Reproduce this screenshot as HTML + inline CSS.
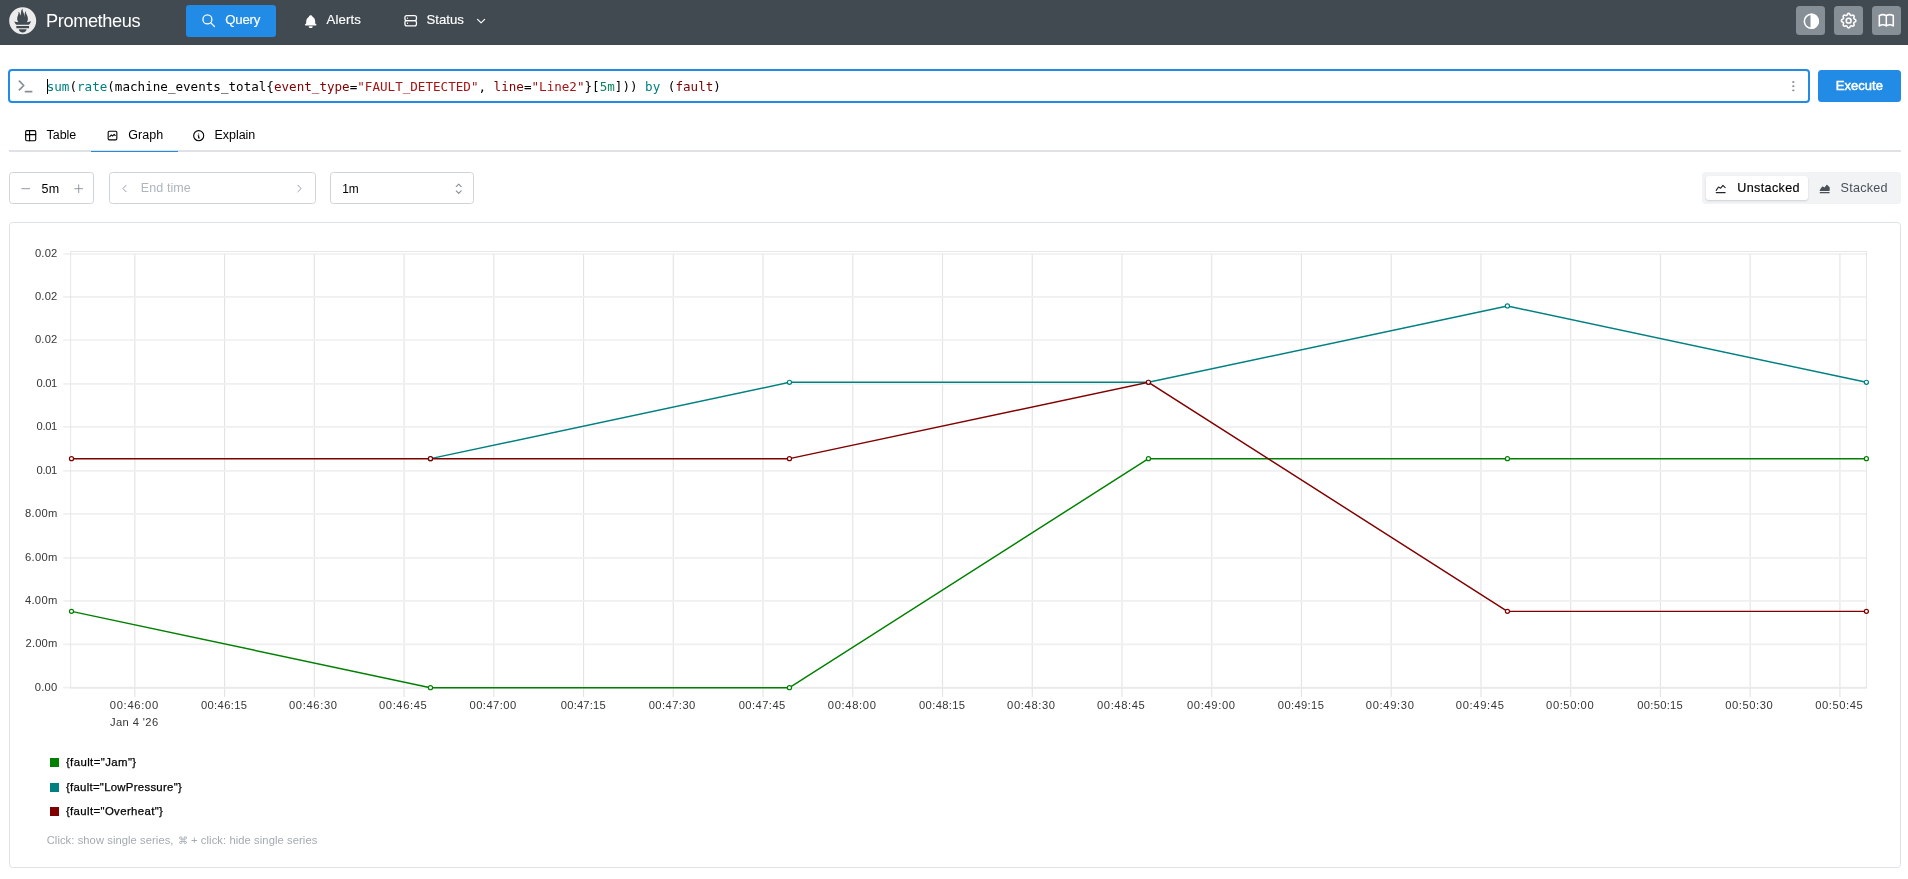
<!DOCTYPE html>
<html lang="en"><head><meta charset="utf-8"><title>Prometheus Time Series Collection and Processing Server</title>
<style>
html,body{margin:0;padding:0;background:#fff;}
body{width:1908px;height:879px;overflow:hidden;position:relative;font-family:"Liberation Sans",sans-serif;}
.t{position:absolute;white-space:pre;line-height:1;}
#root{position:absolute;left:0;top:0;width:1908px;height:879px;will-change:transform;}
.i{position:absolute;overflow:visible;}
.b{position:absolute;box-sizing:border-box;}

#hdr{left:0;top:0;width:1908px;height:44.7px;background:rgb(65,73,81);}
.navact{background:#228be6;border-radius:3px;}
.abtn{background:#868e96;border-radius:3.5px;}
#qin{border:2px solid #228be6;border-radius:4px;background:#fff;}
#exec{background:#228be6;border-radius:3.5px;}
.inp{border:1px solid #ced4da;border-radius:3.5px;background:#fff;}
#tabline{background:#dee2e6;}
#tabact{background:#228be6;}
#seg{background:#f1f3f5;border-radius:3.5px;}
#segact{background:#fff;border-radius:3px;box-shadow:0 1px 3px rgba(0,0,0,.05),0 1px 2px rgba(0,0,0,.1);}
#card{border:1px solid #dee2e6;border-radius:3.5px;background:#fff;}
.sw{position:absolute;width:9px;height:9px;}
.semi{-webkit-text-stroke:0.45px currentColor;}
.med{-webkit-text-stroke:0.15px currentColor;}
.med2{-webkit-text-stroke:0.25px currentColor;}

</style></head><body><div id="root">
<header class="b" id="hdr"></header>
<svg class="i" style="left:8.9px;top:6.9px" width="27.4" height="27.4" viewBox="0 0 113.333 114.666"><path fill="#ececec" d="M56.667,0.667C25.372,0.667,0,26.036,0,57.332c0,31.295,25.372,56.666,56.667,56.666 s56.666-25.371,56.666-56.666C113.333,26.036,87.961,0.667,56.667,0.667z M56.667,106.722c-8.904,0-16.123-5.948-16.123-13.283 H72.79C72.79,100.773,65.571,106.722,56.667,106.722z M83.297,89.04H30.034v-9.658h53.264V89.04z M83.106,74.411h-52.92 c-0.176-0.203-0.356-0.403-0.526-0.609c-5.452-6.62-6.736-10.076-7.983-13.598c-0.021-0.116,6.611,1.355,11.314,2.413 c0,0,2.42,0.56,5.958,1.205c-3.397-3.982-5.414-9.044-5.414-14.218c0-11.359,8.712-21.285,5.569-29.308 c3.059,0.249,6.331,6.456,6.552,16.161c3.252-4.494,4.613-12.701,4.613-17.733c0-5.21,3.433-11.262,6.867-11.469 c-3.061,5.045,0.793,9.37,4.219,20.099c1.285,4.03,1.121,10.812,2.113,15.113C63.797,33.534,65.333,20.5,71,16 c-2.5,5.667,0.37,12.758,2.333,16.167c3.167,5.5,5.087,9.667,5.087,17.548c0,5.284-1.951,10.259-5.242,14.148 c3.742-0.702,6.326-1.335,6.326-1.335l12.152-2.371C91.657,60.156,89.891,67.418,83.106,74.411z"/></svg>
<span class="t " style="left:46.00px;top:11.99px;font-size:18.2px;letter-spacing:-0.389px;color:#fff;font-family:'Liberation Sans', sans-serif;">Prometheus</span>
<div class="b navact" style="left:186px;top:5.2px;width:89.8px;height:31.6px"></div>
<svg class="i" style="left:200.50px;top:12.90px;" width="15.4" height="15.4" viewBox="0 0 24 24" fill="none" stroke="#fff" stroke-width="2" stroke-linecap="round" stroke-linejoin="round"><circle cx="10" cy="10" r="7"/><path d="M21 21l-6 -6"/></svg>
<span class="t med" style="left:225.20px;top:12.93px;font-size:13.2px;letter-spacing:-0.193px;color:#fff;font-family:'Liberation Sans', sans-serif;">Query</span>
<svg class="i" style="left:302.60px;top:13.50px;" width="15.4" height="15.4" viewBox="0 0 24 24" fill="none" stroke="none" stroke-width="2" stroke-linecap="round" stroke-linejoin="round"><path stroke="none" fill="#fff" d="M14.235 19c.865 0 1.322 1.024 .745 1.668a3.992 3.992 0 0 1 -2.98 1.332a3.992 3.992 0 0 1 -2.98 -1.332c-.552 -.616 -.158 -1.579 .634 -1.661l.11 -.006h4.471z"/><path stroke="none" fill="#fff" d="M12 2c1.358 0 2.506 .903 2.875 2.141l.046 .171l.008 .043a8.013 8.013 0 0 1 4.024 6.069l.028 .287l.019 .289v2.931l.021 .136a3 3 0 0 0 1.143 1.847l.167 .117l.162 .099c.86 .487 .56 1.766 -.377 1.864l-.116 .006h-16c-1.028 0 -1.387 -1.364 -.493 -1.87a3 3 0 0 0 1.472 -2.063l.021 -.143l.001 -2.97a8 8 0 0 1 3.821 -6.454l.248 -.146l.01 -.043a3.003 3.003 0 0 1 2.562 -2.29l.182 -.017l.176 -.004z"/></svg>
<span class="t med" style="left:326.60px;top:12.93px;font-size:13.2px;letter-spacing:0.095px;color:#fff;font-family:'Liberation Sans', sans-serif;">Alerts</span>
<svg class="i" style="left:402.70px;top:13.10px;" width="15.4" height="15.4" viewBox="0 0 24 24" fill="none" stroke="#fff" stroke-width="2" stroke-linecap="round" stroke-linejoin="round"><path d="M3 7a3 3 0 0 1 3 -3h12a3 3 0 0 1 3 3v2a3 3 0 0 1 -3 3h-12a3 3 0 0 1 -3 -3z"/><path d="M3 15a3 3 0 0 1 3 -3h12a3 3 0 0 1 3 3v2a3 3 0 0 1 -3 3h-12a3 3 0 0 1 -3 -3z"/><path d="M7 8l0 .01"/><path d="M7 16l0 .01"/></svg>
<span class="t med" style="left:426.60px;top:12.93px;font-size:13.2px;letter-spacing:-0.044px;color:#fff;font-family:'Liberation Sans', sans-serif;">Status</span>
<svg class="i" style="left:474.00px;top:14.00px;" width="14.2" height="14.2" viewBox="0 0 24 24" fill="none" stroke="#fff" stroke-width="2" stroke-linecap="round" stroke-linejoin="round"><path d="M6 9l6 6l6 -6"/></svg>
<div class="b abtn" style="left:1796.2px;top:6px;width:28.8px;height:28.8px"></div>
<svg class="i" style="left:1802.10px;top:11.70px;" width="18.6" height="18.6" viewBox="0 0 24 24" fill="none" stroke="#fff" stroke-width="2" stroke-linecap="round" stroke-linejoin="round"><circle cx="12" cy="12" r="9"/><path d="M12 3a9 9 0 0 1 0 18z" fill="#fff"/></svg>
<div class="b abtn" style="left:1834.2px;top:6px;width:28.8px;height:28.8px"></div>
<svg class="i" style="left:1839.05px;top:10.65px;" width="19.3" height="19.3" viewBox="0 0 24 24" fill="none" stroke="#fff" stroke-width="2" stroke-linecap="round" stroke-linejoin="round"><path d="M10.325 4.317c.426 -1.756 2.924 -1.756 3.35 0a1.724 1.724 0 0 0 2.573 1.066c1.543 -.94 3.31 .826 2.37 2.37a1.724 1.724 0 0 0 1.065 2.572c1.756 .426 1.756 2.924 0 3.35a1.724 1.724 0 0 0 -1.066 2.573c.94 1.543 -.826 3.31 -2.37 2.37a1.724 1.724 0 0 0 -2.572 1.065c-.426 1.756 -2.924 1.756 -3.35 0a1.724 1.724 0 0 0 -2.573 -1.066c-1.543 .94 -3.31 -.826 -2.37 -2.37a1.724 1.724 0 0 0 -1.065 -2.572c-1.756 -.426 -1.756 -2.924 0 -3.35a1.724 1.724 0 0 0 1.066 -2.573c-.94 -1.543 .826 -3.31 2.37 -2.37c1 .608 2.296 .07 2.572 -1.065z"/><path d="M9 12a3 3 0 1 0 6 0a3 3 0 0 0 -6 0"/></svg>
<div class="b abtn" style="left:1872.2px;top:6px;width:28.8px;height:28.8px"></div>
<svg class="i" style="left:1877.30px;top:11.10px;" width="18.6" height="18.6" viewBox="0 0 24 24" fill="none" stroke="#fff" stroke-width="2" stroke-linecap="round" stroke-linejoin="round"><path d="M3 19a9 9 0 0 1 9 0a9 9 0 0 1 9 0"/><path d="M3 6a9 9 0 0 1 9 0a9 9 0 0 1 9 0"/><path d="M3 6l0 13"/><path d="M12 6l0 13"/><path d="M21 6l0 13"/></svg>
<div class="b" id="qin" style="left:8px;top:69px;width:1802px;height:34px"></div>
<svg class="i" style="left:15.20px;top:75.20px;" width="21.0" height="21.0" viewBox="0 0 24 24" fill="none" stroke="#868e96" stroke-width="2" stroke-linecap="round" stroke-linejoin="round"><path d="M5 7l5 5l-5 5"/><path d="M12 19l7 0"/></svg>
<div class="b" style="left:46.9px;top:79px;width:1px;height:15px;background:#000"></div>
<span class="t" style="left:46.70px;top:80.96px;font-size:12.58px;color:#008080;font-family:'DejaVu Sans Mono','Liberation Mono',monospace;letter-spacing:0.0018px">sum</span>
<span class="t" style="left:69.43px;top:80.96px;font-size:12.58px;color:#000;font-family:'DejaVu Sans Mono','Liberation Mono',monospace;letter-spacing:0.0018px">(</span>
<span class="t" style="left:77.00px;top:80.96px;font-size:12.58px;color:#008080;font-family:'DejaVu Sans Mono','Liberation Mono',monospace;letter-spacing:0.0018px">rate</span>
<span class="t" style="left:107.30px;top:80.96px;font-size:12.58px;color:#000;font-family:'DejaVu Sans Mono','Liberation Mono',monospace;letter-spacing:0.0018px">(machine_events_total{</span>
<span class="t" style="left:273.95px;top:80.96px;font-size:12.58px;color:#800000;font-family:'DejaVu Sans Mono','Liberation Mono',monospace;letter-spacing:0.0018px">event_type</span>
<span class="t" style="left:349.70px;top:80.96px;font-size:12.58px;color:#000;font-family:'DejaVu Sans Mono','Liberation Mono',monospace;letter-spacing:0.0018px">=</span>
<span class="t" style="left:357.27px;top:80.96px;font-size:12.58px;color:#a31515;font-family:'DejaVu Sans Mono','Liberation Mono',monospace;letter-spacing:0.0018px">&quot;FAULT_DETECTED&quot;</span>
<span class="t" style="left:478.48px;top:80.96px;font-size:12.58px;color:#000;font-family:'DejaVu Sans Mono','Liberation Mono',monospace;letter-spacing:0.0018px">, </span>
<span class="t" style="left:493.62px;top:80.96px;font-size:12.58px;color:#800000;font-family:'DejaVu Sans Mono','Liberation Mono',monospace;letter-spacing:0.0018px">line</span>
<span class="t" style="left:523.93px;top:80.96px;font-size:12.58px;color:#000;font-family:'DejaVu Sans Mono','Liberation Mono',monospace;letter-spacing:0.0018px">=</span>
<span class="t" style="left:531.50px;top:80.96px;font-size:12.58px;color:#a31515;font-family:'DejaVu Sans Mono','Liberation Mono',monospace;letter-spacing:0.0018px">&quot;Line2&quot;</span>
<span class="t" style="left:584.53px;top:80.96px;font-size:12.58px;color:#000;font-family:'DejaVu Sans Mono','Liberation Mono',monospace;letter-spacing:0.0018px">}[</span>
<span class="t" style="left:599.68px;top:80.96px;font-size:12.58px;color:#098658;font-family:'DejaVu Sans Mono','Liberation Mono',monospace;letter-spacing:0.0018px">5m</span>
<span class="t" style="left:614.83px;top:80.96px;font-size:12.58px;color:#000;font-family:'DejaVu Sans Mono','Liberation Mono',monospace;letter-spacing:0.0018px">]))</span>
<span class="t" style="left:637.55px;top:80.96px;font-size:12.58px;color:#008080;font-family:'DejaVu Sans Mono','Liberation Mono',monospace;letter-spacing:0.0018px"> by </span>
<span class="t" style="left:667.85px;top:80.96px;font-size:12.58px;color:#000;font-family:'DejaVu Sans Mono','Liberation Mono',monospace;letter-spacing:0.0018px">(</span>
<span class="t" style="left:675.43px;top:80.96px;font-size:12.58px;color:#800000;font-family:'DejaVu Sans Mono','Liberation Mono',monospace;letter-spacing:0.0018px">fault</span>
<span class="t" style="left:713.30px;top:80.96px;font-size:12.58px;color:#000;font-family:'DejaVu Sans Mono','Liberation Mono',monospace;letter-spacing:0.0018px">)</span>
<svg class="i" style="left:1786.40px;top:78.60px;" width="14.4" height="14.4" viewBox="0 0 24 24" fill="#868e96" stroke="#868e96" stroke-width="1.6" stroke-linecap="round" stroke-linejoin="round"><circle cx="12" cy="5" r="1"/><circle cx="12" cy="12" r="1"/><circle cx="12" cy="19" r="1"/></svg>
<div class="b" id="exec" style="left:1818.2px;top:70.2px;width:82.8px;height:31.6px"></div>
<span class="t semi" style="left:1835.80px;top:78.80px;font-size:13.0px;letter-spacing:0.034px;color:#fff;font-family:'Liberation Sans', sans-serif;">Execute</span>
<div class="b" id="tabline" style="left:9px;top:150.1px;width:1892px;height:1.9px"></div>
<div class="b" id="tabact" style="left:91px;top:150.8px;width:87px;height:1.3px"></div>
<svg class="i" style="left:23.70px;top:128.50px;" width="13.4" height="13.4" viewBox="0 0 24 24" fill="none" stroke="#000" stroke-width="2" stroke-linecap="round" stroke-linejoin="round"><path d="M3 5a2 2 0 0 1 2 -2h14a2 2 0 0 1 2 2v14a2 2 0 0 1 -2 2h-14a2 2 0 0 1 -2 -2v-14z"/><path d="M3 10h18"/><path d="M10 3v18"/></svg>
<span class="t " style="left:46.60px;top:128.82px;font-size:12.5px;letter-spacing:-0.069px;color:#000;font-family:'Liberation Sans', sans-serif;">Table</span>
<svg class="i" style="left:106.00px;top:128.80px;" width="13.0" height="13.0" viewBox="0 0 24 24" fill="none" stroke="#000" stroke-width="2" stroke-linecap="round" stroke-linejoin="round"><path d="M4 18v-12a2 2 0 0 1 2 -2h12a2 2 0 0 1 2 2v12a2 2 0 0 1 -2 2h-12a2 2 0 0 1 -2 -2z"/><path d="M7 14l3 -3l2 2l3 -3l2 2"/></svg>
<span class="t " style="left:128.30px;top:128.82px;font-size:12.5px;letter-spacing:0.037px;color:#000;font-family:'Liberation Sans', sans-serif;">Graph</span>
<svg class="i" style="left:191.70px;top:128.60px;" width="13.4" height="13.4" viewBox="0 0 24 24" fill="none" stroke="#000" stroke-width="2" stroke-linecap="round" stroke-linejoin="round"><path d="M3 12a9 9 0 1 0 18 0a9 9 0 0 0 -18 0"/><path d="M12 9h.01"/><path d="M11 12h1v4h1"/></svg>
<span class="t " style="left:214.50px;top:128.82px;font-size:12.5px;letter-spacing:-0.033px;color:#000;font-family:'Liberation Sans', sans-serif;">Explain</span>
<div class="b inp" style="left:9px;top:172.2px;width:85px;height:31.6px"></div>
<svg class="i" style="left:18.75px;top:181.80px;" width="13.4" height="13.4" viewBox="0 0 24 24" fill="none" stroke="#868e96" stroke-width="1.6" stroke-linecap="round" stroke-linejoin="round"><path d="M5 12l14 0"/></svg>
<span class="t " style="left:41.50px;top:182.92px;font-size:12.5px;letter-spacing:0.225px;color:#000;font-family:'Liberation Sans', sans-serif;">5m</span>
<svg class="i" style="left:71.80px;top:181.80px;" width="13.4" height="13.4" viewBox="0 0 24 24" fill="none" stroke="#868e96" stroke-width="1.6" stroke-linecap="round" stroke-linejoin="round"><path d="M12 5l0 14"/><path d="M5 12l14 0"/></svg>
<div class="b inp" style="left:109px;top:172.2px;width:207px;height:31.6px"></div>
<svg class="i" style="left:117.85px;top:181.85px;" width="13.0" height="13.0" viewBox="0 0 24 24" fill="none" stroke="#868e96" stroke-width="1.6" stroke-linecap="round" stroke-linejoin="round"><path d="M15 6l-6 6l6 6"/></svg>
<span class="t " style="left:140.80px;top:182.22px;font-size:12.5px;letter-spacing:0.098px;color:#adb5bd;font-family:'Liberation Sans', sans-serif;">End time</span>
<svg class="i" style="left:293.15px;top:181.85px;" width="13.0" height="13.0" viewBox="0 0 24 24" fill="none" stroke="#868e96" stroke-width="1.6" stroke-linecap="round" stroke-linejoin="round"><path d="M9 6l6 6l-6 6"/></svg>
<div class="b inp" style="left:330px;top:172.2px;width:144px;height:31.6px"></div>
<span class="t " style="left:342.20px;top:183.83px;font-size:11.9px;letter-spacing:0.000px;color:#000;font-family:'Liberation Sans', sans-serif;">1m</span>
<svg class="i" style="left:449.70px;top:179.50px;" width="17.4" height="17.4" viewBox="0 0 24 24" fill="none" stroke="#868e96" stroke-width="1.5" stroke-linecap="round" stroke-linejoin="round"><path d="M8.6 9.0l3.4 -3.4l3.4 3.4"/><path d="M15.4 15.0l-3.4 3.4l-3.4 -3.4"/></svg>
<div class="b" id="seg" style="left:1702.2px;top:172.3px;width:198.8px;height:31.5px"></div>
<div class="b" id="segact" style="left:1705.6px;top:175.8px;width:102.8px;height:24.6px"></div>
<svg class="i" style="left:1713.80px;top:181.60px;" width="13.4" height="13.4" viewBox="0 0 24 24" fill="none" stroke="#212529" stroke-width="2" stroke-linecap="round" stroke-linejoin="round"><path d="M4 19l16 0"/><path d="M4 15l4 -6l4 2l4 -5l4 4"/></svg>
<span class="t med" style="left:1737.20px;top:182.13px;font-size:12.6px;letter-spacing:0.358px;color:#000;font-family:'Liberation Sans', sans-serif;">Unstacked</span>
<svg class="i" style="left:1817.80px;top:181.60px;" width="13.4" height="13.4" viewBox="0 0 24 24" fill="none" stroke="none" stroke-width="2" stroke-linecap="round" stroke-linejoin="round"><path stroke="none" fill="#495057" d="M20 18a1 1 0 0 1 .117 1.993l-.117 .007h-16a1 1 0 0 1 -.117 -1.993l.117 -.007h16z"/><path stroke="none" fill="#495057" d="M15.22 5.375a1 1 0 0 1 1.393 -.165l.094 .083l4 4a1 1 0 0 1 .284 .576l.009 .131v5a1 1 0 0 1 -.883 .993l-.117 .007h-16.022l-.11 -.009l-.11 -.02l-.107 -.034l-.105 -.046l-.1 -.059l-.094 -.07l-.06 -.055l-.072 -.082l-.064 -.089l-.054 -.096l-.016 -.035l-.04 -.103l-.027 -.106l-.015 -.108l-.004 -.11l.009 -.11l.019 -.105c.01 -.04 .022 -.077 .035 -.112l.046 -.105l.059 -.1l4 -6a1 1 0 0 1 1.165 -.39l.114 .05l3.277 1.638l3.495 -4.369z"/></svg>
<span class="t " style="left:1840.50px;top:182.13px;font-size:12.6px;letter-spacing:0.242px;color:#495057;font-family:'Liberation Sans', sans-serif;">Stacked</span>
<div class="b" id="card" style="left:9px;top:222px;width:1892px;height:645.5px"></div>
<svg class="i" style="left:0;top:0" width="1908" height="879" viewBox="0 0 1908 879" font-family="'Liberation Sans', sans-serif"><path d="M134.85 253.10V696.90M224.59 253.10V696.90M314.33 253.10V696.90M404.07 253.10V696.90M493.81 253.10V696.90M583.55 253.10V696.90M673.29 253.10V696.90M763.03 253.10V696.90M852.77 253.10V696.90M942.51 253.10V696.90M1032.25 253.10V696.90M1121.99 253.10V696.90M1211.73 253.10V696.90M1301.47 253.10V696.90M1391.21 253.10V696.90M1480.95 253.10V696.90M1570.69 253.10V696.90M1660.43 253.10V696.90M1750.17 253.10V696.90M1839.91 253.10V696.90" stroke="#e4e4e4" stroke-width="1.15" fill="none"/><path d="M63.20 687.70H1866.90M63.20 644.40H1866.90M63.20 600.95H1866.90M63.20 557.85H1866.90M63.20 513.85H1866.90M63.20 470.90H1866.90M63.20 426.90H1866.90M63.20 383.90H1866.90M63.20 340.00H1866.90M63.20 296.85H1866.90M63.20 254.00H1866.90" stroke="#f0f0f0" stroke-width="1.7" fill="none"/><rect x="70.70" y="251.5" width="1795.80" height="436.50" fill="none" stroke="#e2e2e2" stroke-width="0.8"/><text x="34.70" y="690.75" font-size="11.2" letter-spacing="0.272" fill="#363636" >0.00</text><text x="25.50" y="647.45" font-size="11.2" letter-spacing="0.166" fill="#363636" >2.00m</text><text x="24.90" y="604.00" font-size="11.2" letter-spacing="0.316" fill="#363636" >4.00m</text><text x="25.10" y="560.90" font-size="11.2" letter-spacing="0.266" fill="#363636" >6.00m</text><text x="25.10" y="516.90" font-size="11.2" letter-spacing="0.266" fill="#363636" >8.00m</text><text x="36.50" y="473.95" font-size="11.2" letter-spacing="-0.328" fill="#363636" >0.01</text><text x="36.50" y="429.95" font-size="11.2" letter-spacing="-0.328" fill="#363636" >0.01</text><text x="36.50" y="386.95" font-size="11.2" letter-spacing="-0.328" fill="#363636" >0.01</text><text x="34.90" y="343.05" font-size="11.2" letter-spacing="0.205" fill="#363636" >0.02</text><text x="34.90" y="299.90" font-size="11.2" letter-spacing="0.205" fill="#363636" >0.02</text><text x="34.90" y="257.05" font-size="11.2" letter-spacing="0.205" fill="#363636" >0.02</text><text x="109.80" y="709.00" font-size="11.2" letter-spacing="0.682" fill="#363636" >00:46:00</text><text x="200.95" y="709.00" font-size="11.2" letter-spacing="0.354" fill="#363636" >00:46:15</text><text x="288.95" y="709.00" font-size="11.2" letter-spacing="0.639" fill="#363636" >00:46:30</text><text x="379.00" y="709.00" font-size="11.2" letter-spacing="0.597" fill="#363636" >00:46:45</text><text x="469.55" y="709.00" font-size="11.2" letter-spacing="0.439" fill="#363636" >00:47:00</text><text x="560.80" y="709.00" font-size="11.2" letter-spacing="0.197" fill="#363636" >00:47:15</text><text x="648.65" y="709.00" font-size="11.2" letter-spacing="0.439" fill="#363636" >00:47:30</text><text x="738.65" y="709.00" font-size="11.2" letter-spacing="0.439" fill="#363636" >00:47:45</text><text x="827.85" y="709.00" font-size="11.2" letter-spacing="0.639" fill="#363636" >00:48:00</text><text x="919.05" y="709.00" font-size="11.2" letter-spacing="0.354" fill="#363636" >00:48:15</text><text x="1007.05" y="709.00" font-size="11.2" letter-spacing="0.639" fill="#363636" >00:48:30</text><text x="1097.00" y="709.00" font-size="11.2" letter-spacing="0.597" fill="#363636" >00:48:45</text><text x="1186.95" y="709.00" font-size="11.2" letter-spacing="0.639" fill="#363636" >00:49:00</text><text x="1277.85" y="709.00" font-size="11.2" letter-spacing="0.354" fill="#363636" >00:49:15</text><text x="1365.85" y="709.00" font-size="11.2" letter-spacing="0.639" fill="#363636" >00:49:30</text><text x="1455.85" y="709.00" font-size="11.2" letter-spacing="0.639" fill="#363636" >00:49:45</text><text x="1546.10" y="709.00" font-size="11.2" letter-spacing="0.568" fill="#363636" >00:50:00</text><text x="1637.30" y="709.00" font-size="11.2" letter-spacing="0.282" fill="#363636" >00:50:15</text><text x="1725.20" y="709.00" font-size="11.2" letter-spacing="0.568" fill="#363636" >00:50:30</text><text x="1815.20" y="709.00" font-size="11.2" letter-spacing="0.568" fill="#363636" >00:50:45</text><text x="109.90" y="725.70" font-size="11.2" letter-spacing="0.402" fill="#363636" >Jan 4 '26</text><path d="M71.50 611.35L430.48 687.70L789.46 687.70L1148.44 458.65L1507.42 458.65L1866.40 458.65" stroke="#008000" stroke-width="1.45" fill="none" stroke-linejoin="round"/><circle cx="71.50" cy="611.35" r="2.05" fill="#fff" stroke="#008000" stroke-width="1.2"/><circle cx="430.48" cy="687.70" r="2.05" fill="#fff" stroke="#008000" stroke-width="1.2"/><circle cx="789.46" cy="687.70" r="2.05" fill="#fff" stroke="#008000" stroke-width="1.2"/><circle cx="1148.44" cy="458.65" r="2.05" fill="#fff" stroke="#008000" stroke-width="1.2"/><circle cx="1507.42" cy="458.65" r="2.05" fill="#fff" stroke="#008000" stroke-width="1.2"/><circle cx="1866.40" cy="458.65" r="2.05" fill="#fff" stroke="#008000" stroke-width="1.2"/><path d="M430.48 458.65L789.46 382.30L1148.44 382.30L1507.42 305.95L1866.40 382.30" stroke="#008080" stroke-width="1.45" fill="none" stroke-linejoin="round"/><circle cx="430.48" cy="458.65" r="2.05" fill="#fff" stroke="#008080" stroke-width="1.2"/><circle cx="789.46" cy="382.30" r="2.05" fill="#fff" stroke="#008080" stroke-width="1.2"/><circle cx="1148.44" cy="382.30" r="2.05" fill="#fff" stroke="#008080" stroke-width="1.2"/><circle cx="1507.42" cy="305.95" r="2.05" fill="#fff" stroke="#008080" stroke-width="1.2"/><circle cx="1866.40" cy="382.30" r="2.05" fill="#fff" stroke="#008080" stroke-width="1.2"/><path d="M71.50 458.65L430.48 458.65L789.46 458.65L1148.44 382.30L1507.42 611.35L1866.40 611.35" stroke="#800000" stroke-width="1.45" fill="none" stroke-linejoin="round"/><circle cx="71.50" cy="458.65" r="2.05" fill="#fff" stroke="#800000" stroke-width="1.2"/><circle cx="430.48" cy="458.65" r="2.05" fill="#fff" stroke="#800000" stroke-width="1.2"/><circle cx="789.46" cy="458.65" r="2.05" fill="#fff" stroke="#800000" stroke-width="1.2"/><circle cx="1148.44" cy="382.30" r="2.05" fill="#fff" stroke="#800000" stroke-width="1.2"/><circle cx="1507.42" cy="611.35" r="2.05" fill="#fff" stroke="#800000" stroke-width="1.2"/><circle cx="1866.40" cy="611.35" r="2.05" fill="#fff" stroke="#800000" stroke-width="1.2"/></svg>
<div class="sw" style="left:50px;top:758.0px;background:#008000"></div>
<span class="t med2" style="left:65.90px;top:757.05px;font-size:11.4px;letter-spacing:0.405px;color:#000;font-family:'Liberation Sans', sans-serif;">{fault=&quot;Jam&quot;}</span>
<div class="sw" style="left:50px;top:782.6px;background:#008080"></div>
<span class="t med2" style="left:65.90px;top:781.65px;font-size:11.4px;letter-spacing:0.277px;color:#000;font-family:'Liberation Sans', sans-serif;">{fault=&quot;LowPressure&quot;}</span>
<div class="sw" style="left:50px;top:807.1px;background:#800000"></div>
<span class="t med2" style="left:65.90px;top:806.15px;font-size:11.4px;letter-spacing:0.371px;color:#000;font-family:'Liberation Sans', sans-serif;">{fault=&quot;Overheat&quot;}</span>
<span class="t " style="left:46.70px;top:834.92px;font-size:11.2px;letter-spacing:0.072px;color:#a3aab2;font-family:'Liberation Sans', sans-serif;">Click: show single series,</span>
<span class="t " style="left:177.70px;top:836.07px;font-size:9.6px;letter-spacing:0.000px;color:#a3aab2;font-family:'Liberation Sans', sans-serif;">⌘</span>
<span class="t " style="left:191.00px;top:834.92px;font-size:11.2px;letter-spacing:0.088px;color:#a3aab2;font-family:'Liberation Sans', sans-serif;">+ click: hide single series</span>
</div></body></html>
